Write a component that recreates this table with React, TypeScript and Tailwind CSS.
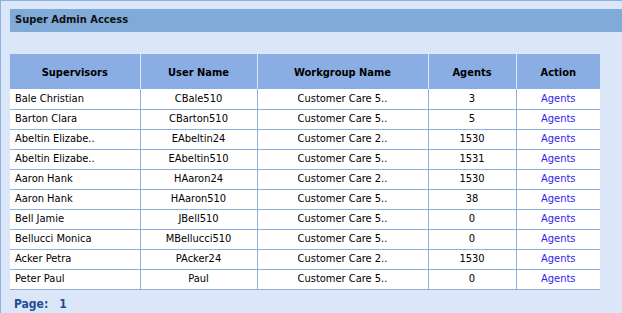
import React from 'react';

const rows = [
    ['Bale Christian', 'CBale510', 'Customer Care 5..', '3'],
    ['Barton Clara', 'CBarton510', 'Customer Care 5..', '5'],
    ['Abeltin Elizabe..', 'EAbeltin24', 'Customer Care 2..', '1530'],
    ['Abeltin Elizabe..', 'EAbeltin510', 'Customer Care 5..', '1531'],
    ['Aaron Hank', 'HAaron24', 'Customer Care 2..', '1530'],
    ['Aaron Hank', 'HAaron510', 'Customer Care 5..', '38'],
    ['Bell Jamie', 'JBell510', 'Customer Care 5..', '0'],
    ['Bellucci Monica', 'MBellucci510', 'Customer Care 5..', '0'],
    ['Acker Petra', 'PAcker24', 'Customer Care 2..', '1530'],
    ['Peter Paul', 'Paul', 'Customer Care 5..', '0'],
];

const App: React.FC = () => {
    return (
        <div className="w-[622px] h-[313px] bg-[#dbe6f8] border-t border-l border-[#8eb0e0] pt-[8px] pl-[9px] overflow-hidden font-['DejaVu_Sans_Condensed','Liberation_Sans',sans-serif] text-[11px] text-black">
            <div className="h-[23px] bg-[#80aad8] flex items-center pl-[5px] font-bold text-[#111]">
                Super Admin Access
            </div>
            <table className="mt-[22px] w-[590px] border-collapse table-fixed">
                <colgroup>
                    <col className="w-[130px]" />
                    <col className="w-[117px]" />
                    <col className="w-[171px]" />
                    <col className="w-[88px]" />
                    <col className="w-[84px]" />
                </colgroup>
                <thead>
                    <tr className="h-[35px] bg-[#8aaee3] font-bold">
                        <th className="border-r border-[#dbe6f8] text-center pt-[3px]">Supervisors</th>
                        <th className="border-r border-[#dbe6f8] text-center pt-[3px]">User Name</th>
                        <th className="border-r border-[#dbe6f8] text-center pt-[3px]">Workgroup Name</th>
                        <th className="border-r border-[#dbe6f8] text-center pt-[3px]">Agents</th>
                        <th className="text-center pt-[3px]">Action</th>
                    </tr>
                </thead>
                <tbody>
                    {rows.map((r, i) => (
                        <tr key={i} className="h-[20px] bg-white border-b border-[#8eb0e0]">
                            <td className="border-r border-[#8eb0e0] pl-[5px] pt-[1px] whitespace-nowrap">{r[0]}</td>
                            <td className="border-r border-[#8eb0e0] text-center pt-[1px]">{r[1]}</td>
                            <td className="border-r border-[#8eb0e0] text-center pt-[1px]">{r[2]}</td>
                            <td className="border-r border-[#8eb0e0] text-center pt-[1px]">{r[3]}</td>
                            <td className="text-center text-[#3322ee] pt-[1px]">Agents</td>
                        </tr>
                    ))}
                </tbody>
            </table>
            <div className="mt-[5px] pl-[4px] font-bold text-[12px] text-[#1f4f8f] flex gap-[11px]">
                <span>Page:</span>
                <span>1</span>
            </div>
        </div>
    );
};

export default App;
